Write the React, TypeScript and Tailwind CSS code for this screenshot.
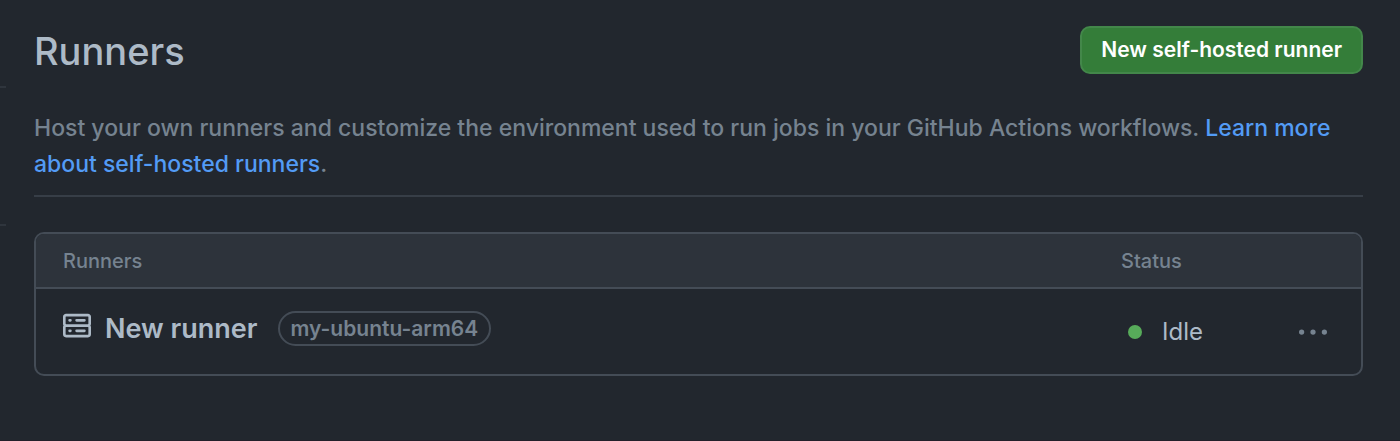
const runners = [{ name: "New runner", label: "my-ubuntu-arm64", status: "Idle" }];

function ServerIcon() {
  return (
    <svg viewBox="0 0 16 16" className="mt-px size-7 shrink-0" fill="currentColor" aria-hidden="true">
      <path d="M1.75 1h12.5c.966 0 1.75.784 1.75 1.75v4c0 .372-.116.717-.314 1 .198.283.314.628.314 1v4a1.75 1.75 0 0 1-1.75 1.75H1.75A1.75 1.75 0 0 1 0 12.75v-4c0-.358.109-.707.314-1a1.739 1.739 0 0 1-.314-1v-4C0 1.784.784 1 1.75 1ZM1.5 2.75v4c0 .138.112.25.25.25h12.5a.25.25 0 0 0 .25-.25v-4a.25.25 0 0 0-.25-.25H1.75a.25.25 0 0 0-.25.25Zm.25 5.75a.25.25 0 0 0-.25.25v4c0 .138.112.25.25.25h12.5a.25.25 0 0 0 .25-.25v-4a.25.25 0 0 0-.25-.25ZM7 4.75A.75.75 0 0 1 7.75 4h4.5a.75.75 0 0 1 0 1.5h-4.5A.75.75 0 0 1 7 4.75ZM7.75 10h4.5a.75.75 0 0 1 0 1.5h-4.5a.75.75 0 0 1 0-1.5ZM3 4.75A.75.75 0 0 1 3.75 4h.5a.75.75 0 0 1 0 1.5h-.5A.75.75 0 0 1 3 4.75ZM3.75 10h.5a.75.75 0 0 1 0 1.5h-.5a.75.75 0 0 1 0-1.5Z" />
    </svg>
  );
}

function KebabIcon() {
  return (
    <svg viewBox="0 0 16 16" className="size-7" fill="currentColor" aria-hidden="true">
      <circle cx="1.5" cy="8" r="1.5" />
      <circle cx="8" cy="8" r="1.5" />
      <circle cx="14.5" cy="8" r="1.5" />
    </svg>
  );
}

export default function App() {
  return (
    <div className="flex min-h-screen border-b border-[#22202a] bg-[#22272e] font-['Inter',sans-serif] text-[#adbac7]">
      {/* Sidebar edge */}
      <aside className="w-[6px] shrink-0 pt-[86px]">
        <div className="h-[140px] border-y-2 border-[#2f353d]" />
      </aside>

      <main className="min-w-0 flex-1 pt-[26px] pr-[37px] pb-16 pl-7">
        <header className="flex items-start justify-between">
          <h1 className="text-[38px] leading-[50px] font-medium">Runners</h1>
          <button
            type="button"
            className="h-12 rounded-[10px] border-2 border-[#43874a] bg-[#347d39] px-[19px] text-[21px] font-semibold text-white"
          >
            New self-hosted runner
          </button>
        </header>

        <p className="mt-[34px] border-b-2 border-[#373e47] pb-[13px] text-[23px] leading-9 font-medium text-[#768390]">
          Host your own runners and customize the environment used to run jobs in your GitHub Actions workflows.{" "}
          <a href="#about" className="text-[#539bf5]">
            Learn more about self-hosted runners
          </a>
          .
        </p>

        {/* Runner list */}
        <div className="mt-[35px] overflow-hidden rounded-[10px] border-2 border-[#444c56]">
          <table className="w-full table-fixed text-left">
            <thead className="bg-[#2d333b] text-[20px] text-[#768390]">
              <tr className="h-[54px] border-b-2 border-[#444c56]">
                <th className="pl-[27px] font-medium">Runners</th>
                <th className="w-[144px] font-medium">Status</th>
                <th className="w-[96px]" aria-label="Actions" />
              </tr>
            </thead>
            <tbody>
              {runners.map((runner) => (
                <tr key={runner.name} className="h-[86px]">
                  <td className="pb-[5px] pl-[27px]">
                    <div className="flex items-start">
                      <ServerIcon />
                      <span className="ml-[14px] text-[27px] leading-9 font-semibold">{runner.name}</span>
                      <span className="ml-5 flex h-[35px] items-center rounded-full border-2 border-[#444c56] px-[11px] text-[21px] font-semibold text-[#768390]">
                        {runner.label}
                      </span>
                    </div>
                  </td>
                  <td>
                    <div className="flex items-center gap-5 pl-[7px] text-[24px]">
                      <span className="size-[14px] rounded-full bg-[#57ab5a]" />
                      {runner.status}
                    </div>
                  </td>
                  <td className="pr-[34px]">
                    <button type="button" aria-label="Runner options" className="ml-auto block text-[#768390]">
                      <KebabIcon />
                    </button>
                  </td>
                </tr>
              ))}
            </tbody>
          </table>
        </div>
      </main>
    </div>
  );
}
